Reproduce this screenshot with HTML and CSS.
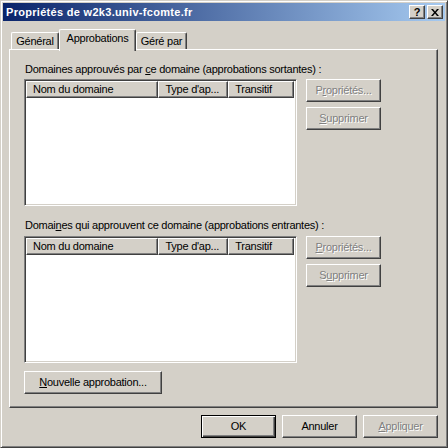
FILE: index.html
```html
<!DOCTYPE html>
<html lang="fr">
<head>
<meta charset="utf-8">
<title>Propriétés de w2k3.univ-fcomte.fr</title>
<link rel="stylesheet" href="styles.css">
</head>
<body>
<div class="window">
  <div class="titlebar">
    <span class="title">Propriétés de w2k3.univ-fcomte.fr</span>
    <div class="tbtns">
      <span class="tbtn help">?</span>
      <span class="tbtn close"><svg width="8" height="7" viewBox="0 0 8 7"><path d="M0 0h2l2 2.5L6 0h2L5 3.5 8 7H6L4 4.5 2 7H0l3-3.5z" fill="#000"/></svg></span>
    </div>
  </div>
  <div class="content">
    <div class="tabs">
      <div class="tab t1">Général</div>
      <div class="tab t2 sel">Approbations</div>
      <div class="tab t3">Géré par</div>
    </div>
    <div class="panel">
      <div class="label">Domaines approuvés par <u>c</u>e domaine (approbations sortantes) :</div>
      <div class="row">
        <div class="list">
          <div class="hdr">
            <span class="col c1">Nom du domaine</span>
            <span class="col c2">Type d'ap...</span>
            <span class="col c3">Transitif</span>
          </div>
        </div>
        <div class="side">
          <div class="btn dis">P<u>r</u>opriétés...</div>
          <div class="btn dis"><u>S</u>upprimer</div>
        </div>
      </div>
      <div class="label l2">Domai<u>n</u>es qui approuvent ce domaine (approbations entrantes) :</div>
      <div class="row r2">
        <div class="list">
          <div class="hdr">
            <span class="col c1">Nom du domaine</span>
            <span class="col c2">Type d'ap...</span>
            <span class="col c3">Transitif</span>
          </div>
        </div>
        <div class="side">
          <div class="btn dis"><u>P</u>ropriétés...</div>
          <div class="btn dis">S<u>u</u>pprimer</div>
        </div>
      </div>
      <div class="btn wide"><u>N</u>ouvelle approbation...</div>
    </div>
    <div class="footer">
      <div class="btn default">OK</div>
      <div class="btn">Annuler</div>
      <div class="btn dis"><u>A</u>ppliquer</div>
    </div>
  </div>
</div>
</body>
</html>
```
FILE: styles.css
```css
* { box-sizing: border-box; }
html, body { margin: 0; padding: 0; }
body {
  width: 448px;
  height: 448px;
  background: #d4d0c8;
  font-family: "Liberation Sans", Arial, sans-serif;
  font-size: 11px;
  line-height: 13px;
  letter-spacing: -0.25px;
  color: #000;
}
.window {
  width: 448px;
  height: 448px;
  background: #d4d0c8;
  border: 1px solid;
  border-color: #d4d0c8 #404040 #404040 #d4d0c8;
  box-shadow: inset 1px 1px #fff, inset -1px -1px #808080;
  padding: 2px;
  display: flex;
  flex-direction: column;
}
.titlebar {
  height: 18px;
  background: linear-gradient(to right, #0a246a, #a6caf0);
  display: flex;
  align-items: center;
  padding-left: 3px;
  padding-right: 2px;
}
.title {
  color: #fff;
  font-weight: bold;
  letter-spacing: 0.3px;
  flex: 1;
  white-space: nowrap;
}
.tbtns {
  display: flex;
  gap: 2px;
}
.tbtn {
  width: 16px;
  height: 14px;
  background: #d4d0c8;
  border: 1px solid;
  border-color: #fff #404040 #404040 #fff;
  box-shadow: inset -1px -1px #808080;
  display: flex;
  align-items: center;
  justify-content: center;
  font-weight: bold;
  font-size: 11px;
  line-height: 10px;
  letter-spacing: 0;
}
.content {
  flex: 1;
  padding: 8px 7px 0 6px;
  display: flex;
  flex-direction: column;
}
.tabs {
  display: flex;
  align-items: flex-end;
  height: 20px;
  margin-left: 2px;
  position: relative;
  z-index: 1;
}
.tab {
  height: 17px;
  border: 1px solid;
  border-bottom: none;
  border-color: #fff #404040 #404040 #fff;
  box-shadow: inset -1px 0 #808080;
  border-radius: 2px 2px 0 0;
  background: #d4d0c8;
  padding-top: 2px;
  text-align: center;
  white-space: nowrap;
}
.t1 { width: 48px; }
.t2 { width: 77px; }
.t3 { width: 51px; }
.tab.sel {
  height: 22px;
  margin-bottom: -2px;
  padding-top: 2px;
}
.panel {
  height: 359px;
  border: 1px solid;
  border-color: #fff #404040 #404040 #fff;
  box-shadow: inset -1px -1px #808080;
  padding: 13px 14px 0 14px;
  display: flex;
  flex-direction: column;
  align-items: flex-start;
}
.label {
  white-space: nowrap;
  padding-left: 1px;
}
.label.l2 { margin-top: 13px; }
.row {
  display: flex;
  margin-top: 3px;
}
.row.r2 { margin-top: 4px; }
.list {
  width: 273px;
  height: 127px;
  background: #fff;
  border: 1px solid;
  border-color: #808080 #fff #fff #808080;
  box-shadow: inset 1px 1px #404040, inset -1px -1px #d4d0c8;
  padding: 1px 2px 2px 1px;
}
.hdr {
  display: flex;
  height: 17px;
}
.col {
  background: #d4d0c8;
  border: 1px solid;
  border-color: #fff #404040 #404040 #fff;
  box-shadow: inset -1px -1px #808080;
  padding: 1px 0 0 6px;
  white-space: nowrap;
  overflow: hidden;
}
.c1 { width: 133px; }
.c2 { width: 70px; }
.c3 { width: 66px; }
.side {
  margin-left: 9px;
  display: flex;
  flex-direction: column;
  gap: 5px;
}
.btn {
  width: 75px;
  height: 23px;
  background: #d4d0c8;
  border: 1px solid;
  border-color: #fff #404040 #404040 #fff;
  box-shadow: inset -1px -1px #808080;
  display: flex;
  align-items: center;
  justify-content: center;
  white-space: nowrap;
}
.btn.dis {
  color: #808080;
  text-shadow: 1px 1px #fff;
}
.btn.wide {
  width: 138px;
  margin-top: 8px;
}
.btn.default {
  border: 1px solid #000;
  box-shadow: inset 1px 1px #fff, inset -1px -1px #404040, inset -2px -2px #808080;
}
.footer {
  display: flex;
  justify-content: flex-end;
  gap: 6px;
  margin-top: 7px;
}
u { text-decoration: underline; text-underline-offset: 1px; }
```
